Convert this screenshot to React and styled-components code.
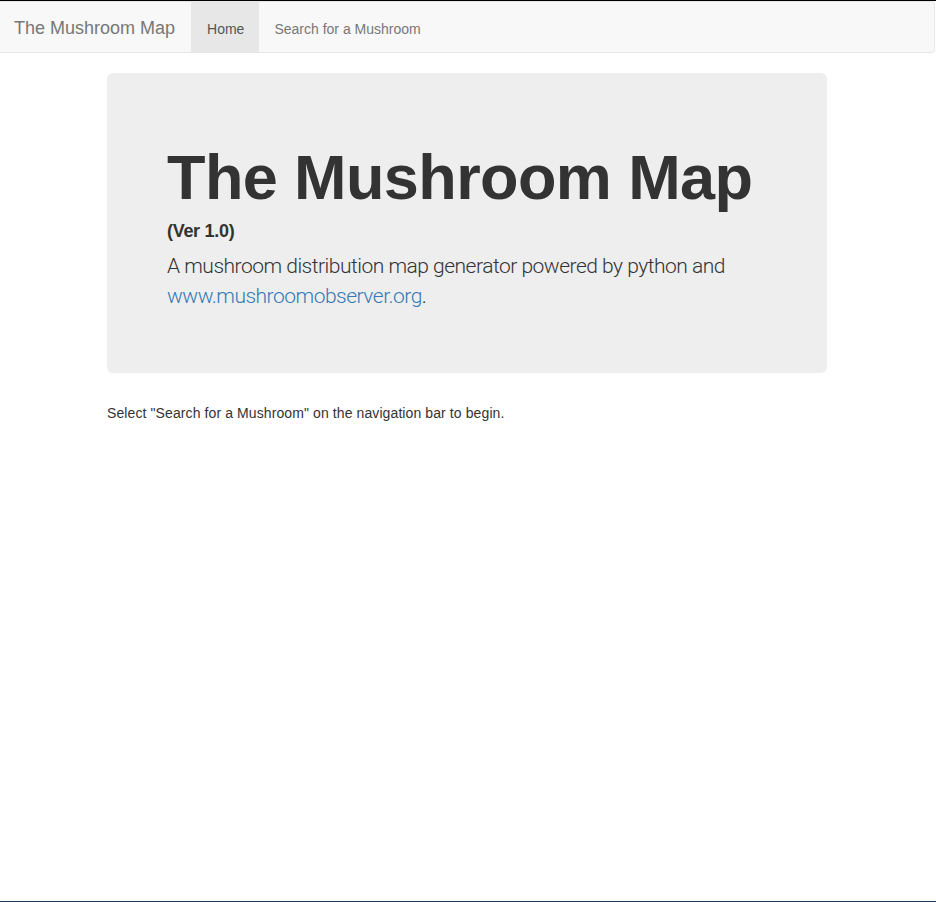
import React from 'react'
import styled, { createGlobalStyle } from 'styled-components'

const GlobalStyle = createGlobalStyle`
  * {
    box-sizing: border-box;
  }

  body {
    margin: 0;
    padding-right: 2px;
    border-top: 1px solid #000;
    border-bottom: 1px solid #1c3b5a;
    min-height: 902px;
    background: #fff;
    color: #333;
    font-family: "Liberation Sans", Arial, sans-serif;
    font-size: 14px;
    line-height: 1.42857;
  }
`

const Navbar = styled.nav`
  display: flex;
  align-items: stretch;
  min-height: 52px;
  margin: 0 -1px 20px 0;
  background-color: #f8f8f8;
  border: 1px solid #e7e7e7;
  border-left: none;
  border-radius: 0 4px 4px 0;
`

const Brand = styled.a`
  padding: 16px 16px 14px 14px;
  font-size: 18px;
  line-height: 20px;
  height: 50px;
  color: #777;
  text-decoration: none;
`

const NavList = styled.ul`
  display: flex;
  list-style: none;
  margin: 0;
  padding: 0;
`

const NavLink = styled.a`
  display: block;
  height: 50px;
  padding: 17px 15px 13px ${props => props.active ? '16px' : '15px'};
  line-height: 20px;
  color: ${props => props.active ? '#555' : '#777'};
  background-color: ${props => props.active ? '#e7e7e7' : 'transparent'};
  text-decoration: none;
`

const Container = styled.div`
  width: 750px;
  margin: 0 auto;
  padding: 0 15px;
`

const Jumbotron = styled.div`
  padding: 48px 60px;
  margin-bottom: 30px;
  background-color: #eee;
  border-radius: 6px;
`

const Title = styled.h1`
  margin: 22px 0 8px;
  font-size: 63px;
  font-weight: 700;
  letter-spacing: -0.6px;
  line-height: 1.1;
  color: #333;
`

const Version = styled.h4`
  margin: 10px 0;
  font-size: 18px;
  font-weight: 700;
  line-height: 1.1;
  letter-spacing: -0.3px;
`

const Lead = styled.p`
  margin: -1px 0 14px;
  font-family: Roboto, "Liberation Sans", sans-serif;
  font-size: 21px;
  line-height: 30px;
  font-weight: 300;
  letter-spacing: -0.5px;
  color: #333;

  & a {
    color: #337ab7;
    text-decoration: none;
  }
`

const Note = styled.p`
  margin: 0 0 10px;
  padding-top: 1px;
  font-size: 14px;
  letter-spacing: 0.1px;
`

export default function App () {
  return (
    <>
      <GlobalStyle />
      <Navbar>
        <Brand href='#'>The Mushroom Map</Brand>
        <NavList>
          <li><NavLink href='#' active>Home</NavLink></li>
          <li><NavLink href='#'>Search for a Mushroom</NavLink></li>
        </NavList>
      </Navbar>
      <Container>
        <Jumbotron>
          <Title>The Mushroom Map</Title>
          <Version>(Ver 1.0)</Version>
          <Lead>
            A mushroom distribution map generator powered by python and{' '}
            <a href='#'>www.mushroomobserver.org</a>.
          </Lead>
        </Jumbotron>
        <Note>Select "Search for a Mushroom" on the navigation bar to begin.</Note>
      </Container>
    </>
  )
}
